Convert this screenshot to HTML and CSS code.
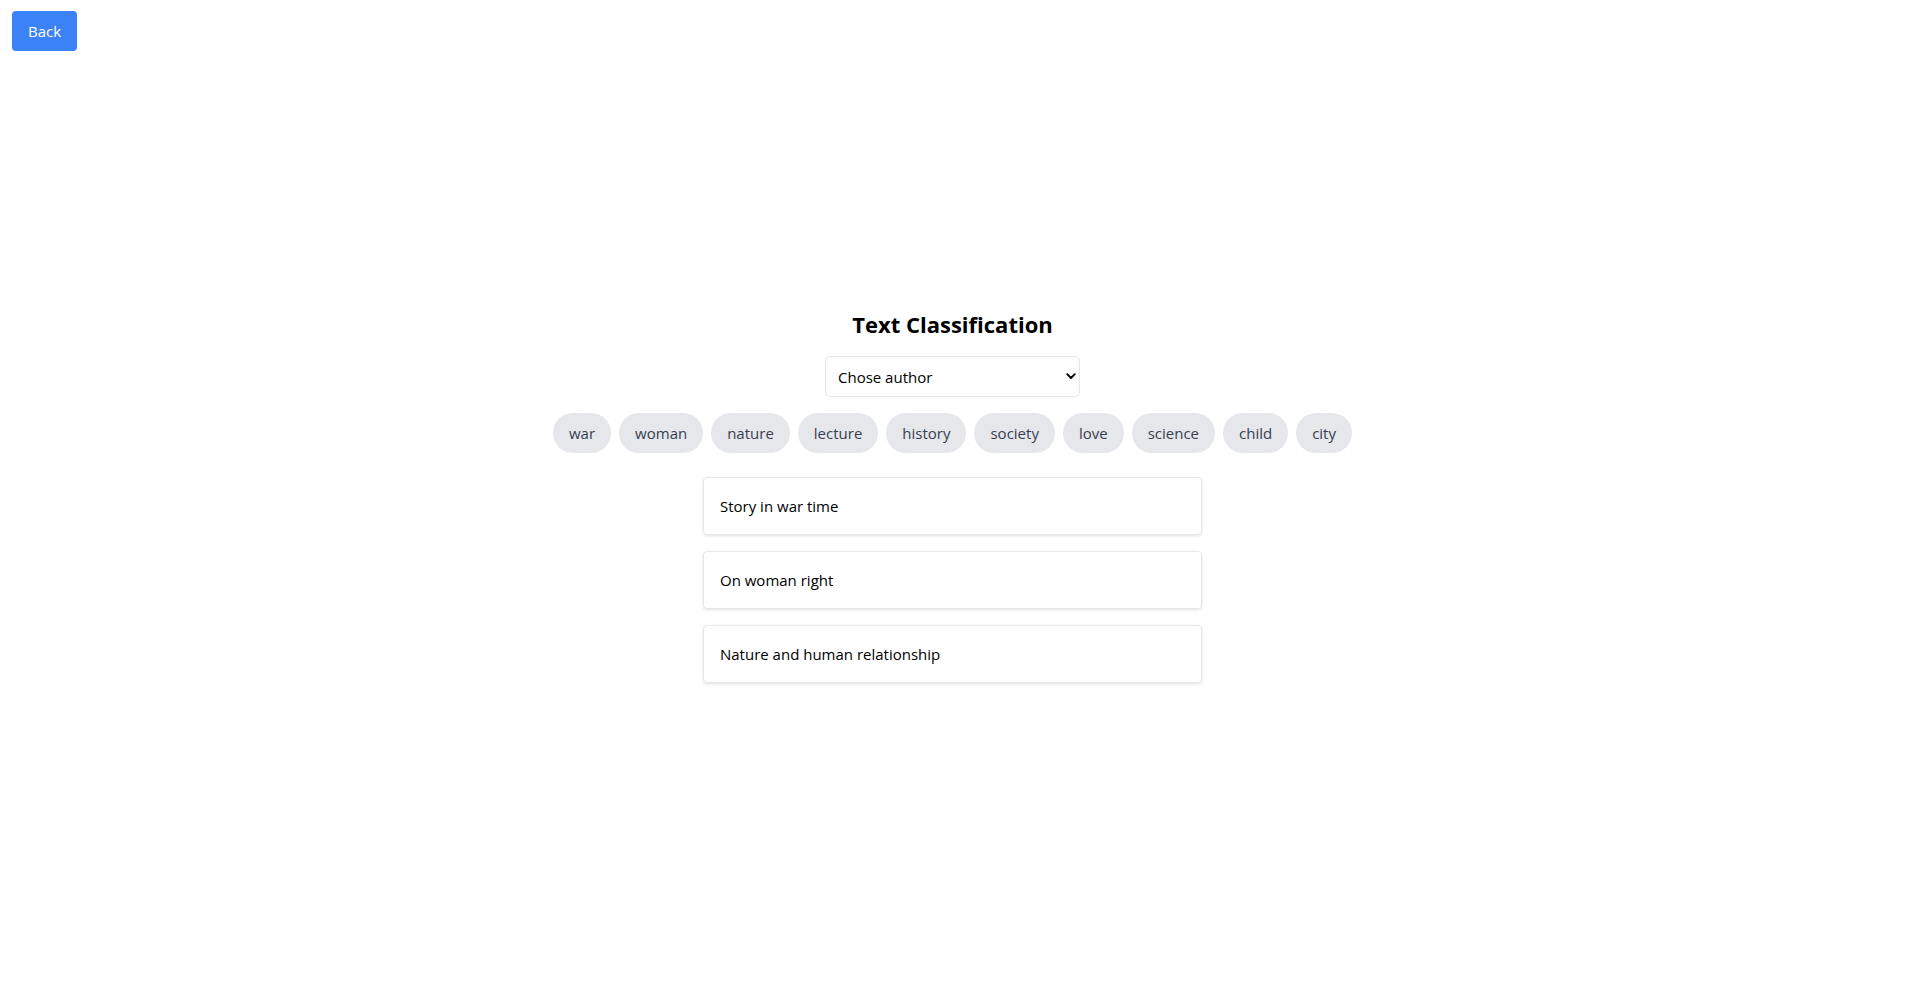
FILE: index.html
```html
<!DOCTYPE html>
<html lang="en">
<head>
<meta charset="utf-8">
<title>Text Classification</title>
<link rel="stylesheet" href="styles.css">
</head>
<body>
<button class="back-btn">Back</button>
<main class="page">
  <div class="panel">
    <h1 class="title">Text Classification</h1>
    <div class="select-wrap">
      <select class="author-select">
        <option>Chose author</option>
      </select>
      <svg class="chevron" width="10" height="7" viewBox="0 0 10 7"><path d="M1.2 1.2 L5 5 L8.8 1.2" fill="none" stroke="#000" stroke-width="1.9" stroke-linecap="round" stroke-linejoin="round"/></svg>
    </div>
    <div class="tags">
      <span class="tag">war</span>
      <span class="tag">woman</span>
      <span class="tag">nature</span>
      <span class="tag">lecture</span>
      <span class="tag">history</span>
      <span class="tag">society</span>
      <span class="tag">love</span>
      <span class="tag">science</span>
      <span class="tag">child</span>
      <span class="tag">city</span>
    </div>
    <ul class="cards">
      <li class="card">Story in war time</li>
      <li class="card">On woman right</li>
      <li class="card">Nature and human relationship</li>
    </ul>
  </div>
</main>
</body>
</html>
```

FILE: styles.css
```css
* { box-sizing: border-box; }
html, body { margin: 0; padding: 0; }
body {
  font-family: "Open Sans", "Noto Sans", sans-serif;
  font-size: 16px;
  line-height: 24px;
  color: #000;
  background: #fff;
}
.back-btn {
  position: absolute;
  top: 11px;
  left: 12px;
  height: 40px;
  padding: 0 16px;
  background: #3b82f6;
  color: #fff;
  border: none;
  border-radius: 4px;
  font-family: inherit;
  font-size: 15px;
  cursor: pointer;
}
.page {
  min-height: 100vh;
  display: flex;
  align-items: center;
  justify-content: center;
}
.panel {
  display: flex;
  flex-direction: column;
  align-items: center;
  padding-top: 2px;
}
.title {
  margin: 0 0 16px;
  font-size: 22px;
  line-height: 32px;
  font-weight: 700;
}
.select-wrap {
  position: relative;
  width: 255px;
  height: 41px;
}
.author-select {
  appearance: none;
  -webkit-appearance: none;
  width: 100%;
  height: 100%;
  padding: 0 12px;
  border: 1px solid #e5e7eb;
  border-radius: 5px;
  background: #fff;
  font-family: inherit;
  font-size: 15px;
  color: #000;
}
.chevron {
  position: absolute;
  right: 4px;
  top: 17px;
  pointer-events: none;
}
.tags {
  display: flex;
  gap: 8px;
  margin-top: 16px;
}
.tag {
  display: block;
  height: 40px;
  padding: 8px 16px;
  border-radius: 9999px;
  background: #e5e7eb;
  color: #374151;
  font-size: 15px;
}
.cards {
  list-style: none;
  margin: 24px 0 0;
  padding: 0;
  width: 499px;
  display: flex;
  flex-direction: column;
  gap: 16px;
}
.card {
  height: 58px;
  padding: 16px;
  border: 1px solid #e5e7eb;
  border-radius: 4px;
  box-shadow: 0 1px 3px rgba(0,0,0,0.12);
  font-size: 15px;
}
```
